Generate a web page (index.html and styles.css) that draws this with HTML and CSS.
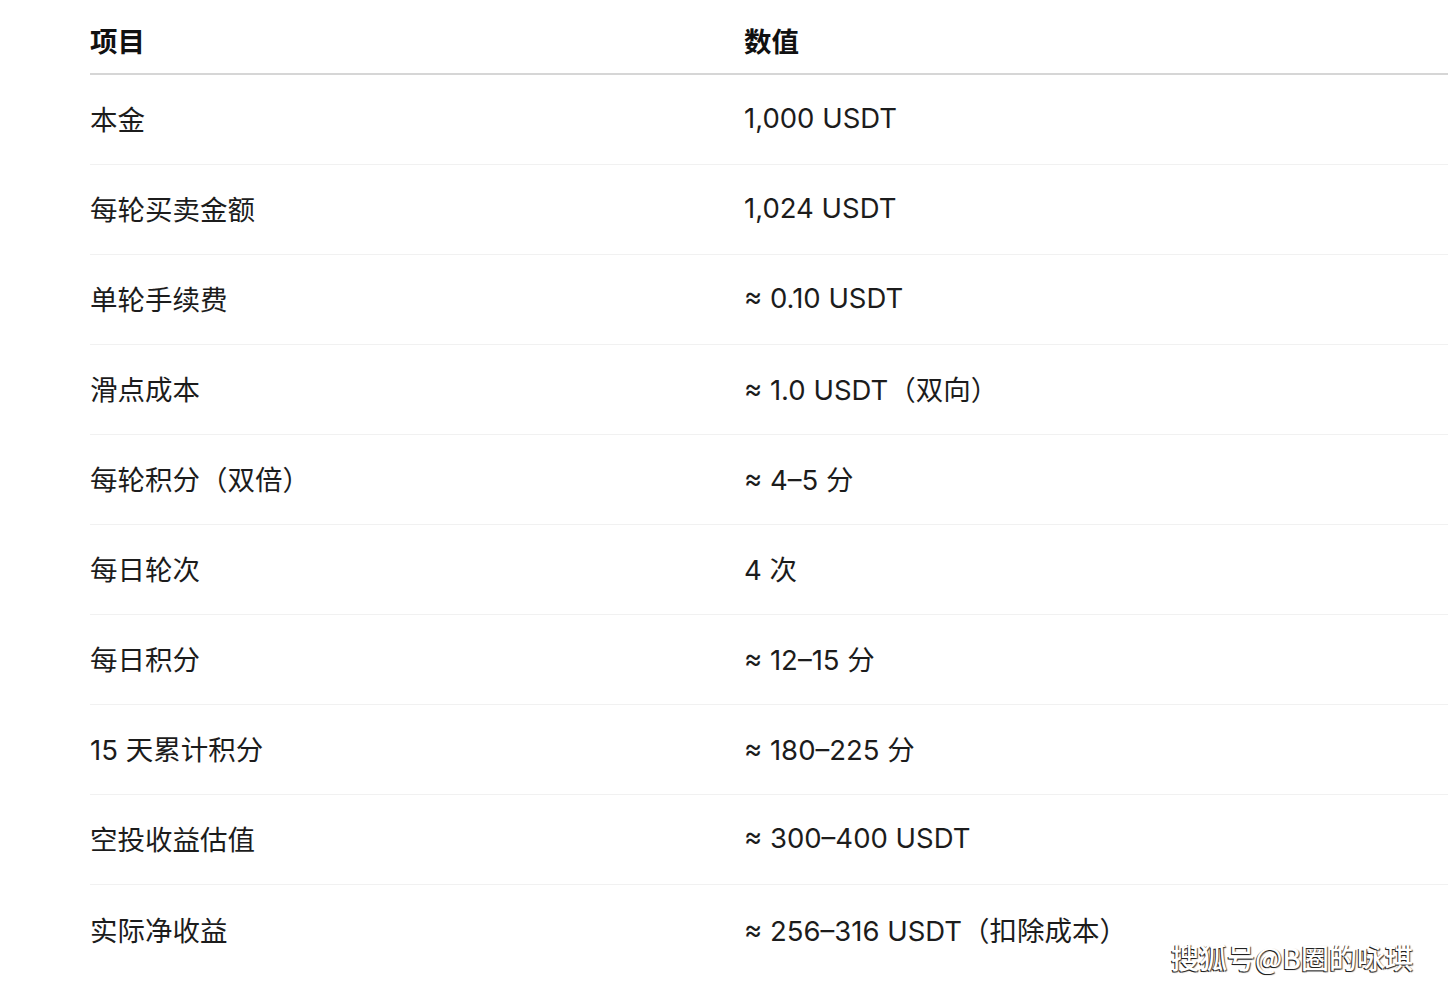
FILE: index.html
```html
<!DOCTYPE html>
<html lang="zh-CN">
<head>
<meta charset="utf-8">
<link rel="stylesheet" href="styles.css">
</head>
<body>
<div class="page">
  <div class="table">
    <div class="row head"><div class="cell">项目</div><div class="cell">数值</div></div>
    <div class="row"><div class="cell">本金</div><div class="cell">1,000 USDT</div></div>
    <div class="row"><div class="cell">每轮买卖金额</div><div class="cell">1,024 USDT</div></div>
    <div class="row"><div class="cell">单轮手续费</div><div class="cell">≈ 0.10 USDT</div></div>
    <div class="row"><div class="cell">滑点成本</div><div class="cell">≈ 1.0 USDT（双向）</div></div>
    <div class="row"><div class="cell">每轮积分（双倍）</div><div class="cell">≈ 4–5 分</div></div>
    <div class="row"><div class="cell">每日轮次</div><div class="cell">4 次</div></div>
    <div class="row"><div class="cell">每日积分</div><div class="cell">≈ 12–15 分</div></div>
    <div class="row"><div class="cell">15 天累计积分</div><div class="cell">≈ 180–225 分</div></div>
    <div class="row"><div class="cell">空投收益估值</div><div class="cell">≈ 300–400 USDT</div></div>
    <div class="row last"><div class="cell">实际净收益</div><div class="cell">≈ 256–316 USDT（扣除成本）</div></div>
  </div>
  <div class="watermark">搜狐号@B圈的咏琪</div>
</div>
</body>
</html>
```
FILE: styles.css
```css
html, body {
  margin: 0;
  padding: 0;
  background: #ffffff;
  overflow: hidden;
}
.page {
  position: relative;
  width: 1448px;
  height: 990px;
  overflow: hidden;
  font-family: "Inter", "Noto Sans CJK SC", sans-serif;
  color: #1c1c1c;
}
.table {
  margin-left: 90px;
  width: 1400px;
}
.row {
  display: grid;
  grid-template-columns: 654px 1fr;
  align-items: center;
  box-sizing: border-box;
  height: 90px;
  padding-bottom: 3px;
  border-bottom: 1px solid #f1f1f1;
  font-size: 27.5px;
  font-weight: 400;
}
.row.head {
  height: 75px;
  padding-top: 7px;
  padding-bottom: 1px;
  border-bottom: 2px solid #d6d6d6;
  font-weight: 700;
  color: #111;
}
.row.last {
  border-bottom: none;
}
.cell {
  white-space: nowrap;
}
.watermark {
  position: absolute;
  left: 1171px;
  top: 937px;
  font-family: "Noto Sans CJK SC", sans-serif;
  font-size: 28px;
  font-weight: 500;
  color: #ffffff;
  text-shadow: -1px 1px 0 #222, 1px 1px 1px #444;
}
```
